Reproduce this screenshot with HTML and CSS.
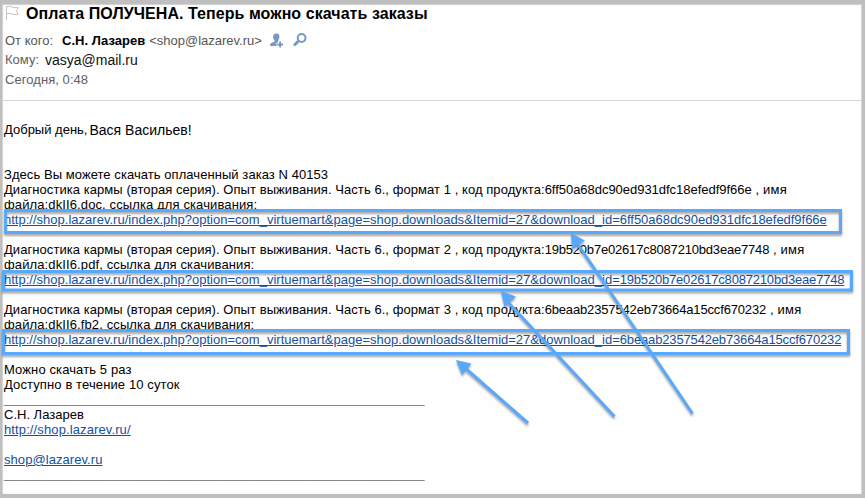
FILE: index.html
```html
<!DOCTYPE html>
<html lang="ru">
<head>
<meta charset="utf-8">
<title>Оплата ПОЛУЧЕНА</title>
<link rel="stylesheet" href="styles.css">
</head>
<body>
<main class="mail">
  <header class="head">
    <div class="subject">
      <svg class="flag" width="15" height="16" viewBox="0 0 15 16"><path d="M1.5 15V1.5H6.5L8 2.5H13L11.5 6L13 9.500H8L6.500 8.500H1.500" fill="none" stroke="#c4c4c4"/></svg>
      <h1>Оплата ПОЛУЧЕНА. Теперь можно скачать заказы</h1>
    </div>
    <div class="row from">
      <span class="label">От кого:</span>
      <b class="name">С.Н. Лазарев</b>
      <span class="addr">&lt;shop@lazarev.ru&gt;</span>
      <svg class="user" width="14" height="15" viewBox="0 0 14 15"><path fill="#7598c4" d="M6.300 0.500C8.500 0.500 9.600 2 9.400 4C9.300 5.700 8.500 6.500 8.200 7.500V8.500H8V9.500H6.500V13H0C0 10.500 1 10 4.500 8.800V7.500C3.700 6.500 3.200 5.500 3.100 4C3 2 4.200 0.500 6.300 0.500ZM9.200 8.500H11V10.500H13V12.500H11V14.500H9.200V12.500H7.200V10.500H9.200Z"/></svg>
      <svg class="lens" width="14" height="14" viewBox="0 0 14 14" fill="none" stroke="#7598c4"><circle cx="8.600" cy="5" r="3.900" stroke-width="2"/><path d="M5.500 8L1 12.500" stroke-width="2.800"/></svg>
    </div>
    <div class="row"><span class="label">Кому:</span><span class="typed">vasya@mail.ru</span></div>
    <div class="row date"><span class="label">Сегодня, 0:48</span></div>
  </header>
  <section class="body">
    <p class="line greet"><span>Добрый день,</span><span class="person">Вася Васильев!</span></p>
    <p class="line"></p>
    <p class="line"></p>
    <p class="line text">Здесь Вы можете скачать оплаченный заказ N 40153</p>
    <p class="line text">Диагностика кармы (вторая серия). Опыт выживания. Часть 6., формат 1 , код продукта:<span class="code-a">6ff50a68dc90ed931dfc18efedf9f66e</span><span class="tail"> , имя</span></p>
    <p class="line file">файла:dkII6.doc, ссылка для скачивания:</p>
    <p class="line"><a class="long" href="#">http://shop.lazarev.ru/index.php?option=com_virtuemart&amp;page=shop.downloads&amp;Itemid=27&amp;download_id=<span class="code-a">6ff50a68dc90ed931dfc18efedf9f66e</span></a></p>
    <p class="line"></p>
    <p class="line text">Диагностика кармы (вторая серия). Опыт выживания. Часть 6., формат 2 , код продукта:<span class="code-b">19b520b7e02617c8087210bd3eae7748</span><span class="tail"> , имя</span></p>
    <p class="line file">файла:dkII6.pdf, ссылка для скачивания:</p>
    <p class="line"><a class="long" href="#">http://shop.lazarev.ru/index.php?option=com_virtuemart&amp;page=shop.downloads&amp;Itemid=27&amp;download_id=<span class="code-b">19b520b7e02617c8087210bd3eae7748</span></a></p>
    <p class="line"></p>
    <p class="line text">Диагностика кармы (вторая серия). Опыт выживания. Часть 6., формат 3 , код продукта:<span class="code-c">6beaab2357542eb73664a15ccf670232</span><span class="tail"> , имя</span></p>
    <p class="line file">файла:dkII6.fb2, ссылка для скачивания:</p>
    <p class="line"><a class="long" href="#">http://shop.lazarev.ru/index.php?option=com_virtuemart&amp;page=shop.downloads&amp;Itemid=27&amp;download_id=<span class="code-c">6beaab2357542eb73664a15ccf670232</span></a></p>
    <p class="line"></p>
    <p class="line file">Можно скачать 5 раз</p>
    <p class="line file">Доступно в течение 10 суток</p>
    <p class="line rule">__________________________________________________________</p>
    <p class="line">С.Н. Лазарев</p>
    <p class="line file"><a href="#">http://shop.lazarev.ru/</a></p>
    <p class="line"></p>
    <p class="line text"><a href="#">shop@lazarev.ru</a></p>
    <p class="line rule">__________________________________________________________</p>
  </section>
</main>
<svg class="marks" width="865" height="498" viewBox="0 0 865 498">
  <g fill="none" stroke="#58a8fb" stroke-width="3">
    <rect x="5.500" y="210.500" width="835" height="22"/>
    <rect x="3.500" y="271.500" width="848" height="18.500"/>
    <rect x="3.500" y="330.500" width="845" height="23"/>
    <path d="M692.500 413.500L577 243M614.500 416.500L506 300M528 423L464 367"/>
  </g>
  <g fill="#58a8fb">
    <path d="M571 233L585 240.500L572 249Z"/>
    <path d="M501 291L516 296.500L504.500 307Z"/>
    <path d="M456 360L471.500 363.500L462 375Z"/>
  </g>
</svg>
</body>
</html>
```

FILE: styles.css
```css
* { box-sizing: border-box; }
body {
  margin: 0;
  width: 865px;
  height: 498px;
  overflow: hidden;
  position: relative;
  background: #bfbfbf;
  font: 13px/15px "Liberation Sans", Arial, sans-serif;
  color: #000;
}
.mail {
  height: 494px;
  border: solid #bfbfbf;
  border-width: 4px 3px 0 2px;
  background: #fefefe;
  box-shadow: inset 1px 1px 1px #d0d0d0, inset -1px 0 1px #d8d8d8;
}
.head {
  height: 97px;
  padding-left: 3px;
  border-bottom: 1px solid #d5d5d5;
}
.subject { display: flex; height: 27px; }
.flag { margin-top: 1px; }
h1 { margin: 0 0 0 6px; font-size: 16px; line-height: 20px; white-space: nowrap; letter-spacing: .06px; }
.row { display: flex; height: 19px; line-height: 19px; white-space: nowrap; color: #606060; }
.from { align-items: center; color: #555; }
.name { color: #000; margin-left: 9px; }
.addr { margin-left: 4px; }
.user { margin-left: 8px; }
.lens { margin: -2px 0 0 9px; }
.date { padding-top: 1px; letter-spacing: .06px; }
.typed { margin-left: 6px; padding-top: 1px; color: #111; font-size: 14px; }
.body { padding: 21px 0 0 2px; }
.line { margin: 0; height: 15px; white-space: nowrap; }
.text { letter-spacing: .062px; }
.file { letter-spacing: .115px; }
.greet { display: flex; }
.person { margin-left: 2px; font-size: 14px; line-height: 16px; }
.long { letter-spacing: .01px; }
.code-a { letter-spacing: -.03px; }
.code-b { letter-spacing: -.19px; }
.code-c { letter-spacing: -.15px; }
.tail { letter-spacing: .2px; }
a { color: #1450a0; text-decoration: underline; }
.rule { color: #777; letter-spacing: .02px; line-height: 13px; }
.marks { position: absolute; left: 0; top: 0; filter: drop-shadow(0 2px 1px rgba(0,0,0,.35)); }
```
